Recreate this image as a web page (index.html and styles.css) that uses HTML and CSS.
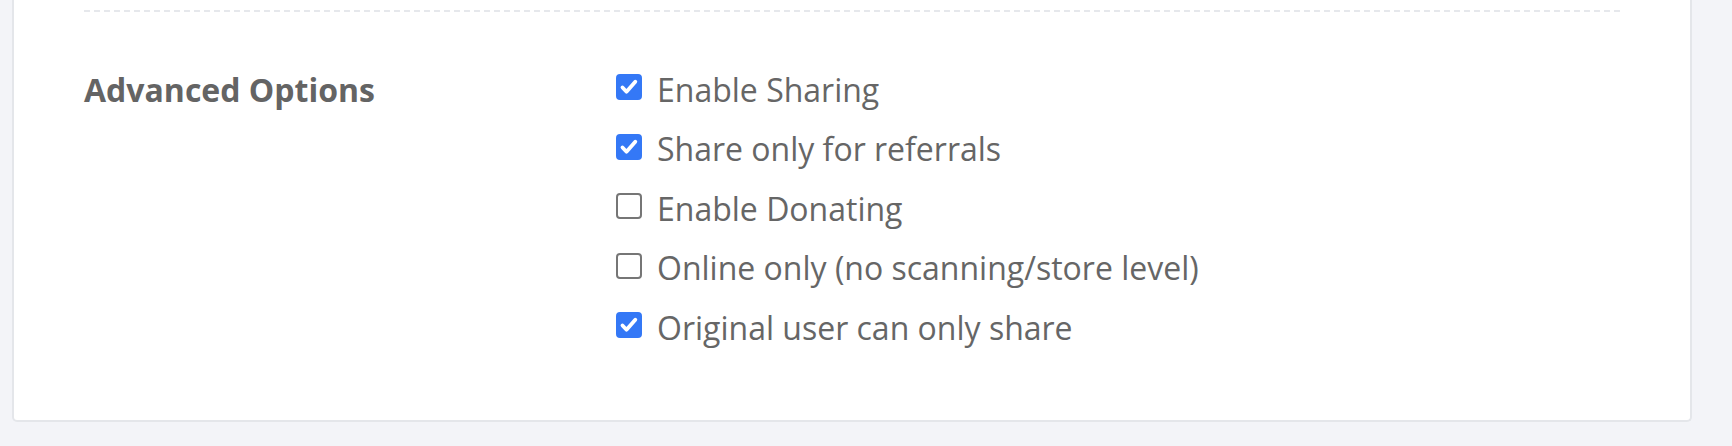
FILE: index.html
```html
<!DOCTYPE html>
<html lang="en">
<head>
<meta charset="utf-8">
<title>Advanced Options</title>
<link rel="stylesheet" href="styles.css">
</head>
<body>
<div class="card">
  <div class="divider"></div>
  <section class="section">
    <h3 class="section-title">Advanced Options</h3>
    <ul class="options">
      <li class="option"><span class="box checked"><svg viewBox="0 0 26 26"><path d="M6.5 13.5l4 4.2 8.8-10" fill="none" stroke="#fff" stroke-width="3.8" stroke-linecap="round" stroke-linejoin="round"/></svg></span><span class="label">Enable Sharing</span></li>
      <li class="option"><span class="box checked"><svg viewBox="0 0 26 26"><path d="M6.5 13.5l4 4.2 8.8-10" fill="none" stroke="#fff" stroke-width="3.8" stroke-linecap="round" stroke-linejoin="round"/></svg></span><span class="label">Share only for referrals</span></li>
      <li class="option"><span class="box"></span><span class="label">Enable Donating</span></li>
      <li class="option"><span class="box"></span><span class="label">Online only (no scanning/store level)</span></li>
      <li class="option"><span class="box checked"><svg viewBox="0 0 26 26"><path d="M6.5 13.5l4 4.2 8.8-10" fill="none" stroke="#fff" stroke-width="3.8" stroke-linecap="round" stroke-linejoin="round"/></svg></span><span class="label">Original user can only share</span></li>
    </ul>
  </section>
</div>
</body>
</html>
```
FILE: styles.css
```css
html, body {
  margin: 0;
  padding: 0;
  background: #f3f4f8;
  font-family: "Open Sans", "Noto Sans", sans-serif;
}
.card {
  box-sizing: border-box;
  margin-left: 12px;
  width: 1680px;
  background: #ffffff;
  border: 2px solid #e4e6ea;
  border-top: none;
  border-radius: 0 0 5px 5px;
  padding: 10px 70px 0 70px;
}
.divider {
  border-top: 2px dashed #e6e8ec;
}
.section {
  display: grid;
  grid-template-columns: 532px 1fr;
  padding-top: 55px;
  padding-bottom: 75px;
}
.section-title {
  margin: 0;
  font-size: 32px;
  font-weight: 700;
  line-height: 46px;
  color: #646464;
}
.options {
  list-style: none;
  margin: 0;
  padding: 0;
  display: flex;
  flex-direction: column;
  gap: 19.5px;
}
.option {
  display: flex;
  align-items: center;
  height: 40px;
}
.box {
  box-sizing: border-box;
  width: 26px;
  height: 26px;
  border: 2px solid #767676;
  border-radius: 4px;
  background: #fff;
  margin-right: 15px;
  display: flex;
  flex: none;
}
.box.checked {
  background: #3478f6;
  border-color: #3478f6;
}
.box svg {
  width: 26px;
  height: 26px;
  margin: -2px;
}
.label {
  font-size: 32px;
  line-height: 40px;
  padding-top: 5px;
  color: #666666;
}
```
